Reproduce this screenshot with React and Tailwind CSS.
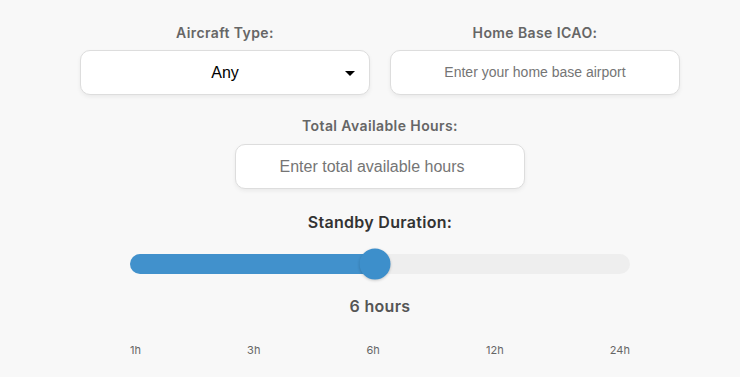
const ticks = ["1h", "3h", "6h", "12h", "24h"];

const Label = ({ children }) => (
  <label className="block text-center text-[14px] font-semibold leading-5 tracking-[0.4px] text-[#666] mb-[8px]">
    {children}
  </label>
);

export default function App() {
  const percent = 49;

  return (
    <div
      className="min-h-[377px] w-full bg-[#f8f8f8] pl-5 pt-[23px]"
      style={{ fontFamily: "Inter, 'Noto Sans', sans-serif" }}
    >
      <div className="mx-auto w-[600px]">
        <div className="grid grid-cols-2 gap-5">
          <div>
            <Label>Aircraft Type:</Label>
            <div className="relative -mt-px flex h-[45px] items-center justify-center rounded-[10px] border border-[#dddddd] bg-white shadow-[0_2px_4px_rgba(0,0,0,0.06)]">
              <span className="text-[16px] text-black" style={{ fontFamily: "'Liberation Sans', Arial, sans-serif" }}>
                Any
              </span>
              <span className="absolute right-[14px] top-[20px] h-0 w-0 border-x-[5px] border-t-[5px] border-x-transparent border-t-black" />
            </div>
          </div>
          <div>
            <Label>Home Base ICAO:</Label>
            <div className="-mt-px flex h-[45px] items-center justify-center rounded-[10px] border border-[#dddddd] bg-white shadow-[0_2px_4px_rgba(0,0,0,0.06)]">
              <span className="text-[14px] text-[#757575]" style={{ fontFamily: "'Liberation Sans', Arial, sans-serif" }}>
                Enter your home base airport
              </span>
            </div>
          </div>
        </div>

        <div className="mx-auto mt-[21px] w-[290px]">
          <Label>Total Available Hours:</Label>
          <div className="flex h-[45px] items-center justify-center rounded-[10px] border border-[#dddddd] bg-white pr-4 shadow-[0_2px_4px_rgba(0,0,0,0.06)]">
            <span className="text-[16px] text-[#757575]" style={{ fontFamily: "'Liberation Sans', Arial, sans-serif" }}>
              Enter total available hours
            </span>
          </div>
        </div>

        <div className="mt-[22px] text-center text-[16px] font-semibold leading-[22px] tracking-[0.3px] text-[#333]">
          Standby Duration:
        </div>

        <div className="mx-auto mt-[21px] w-[500px]">
          <div className="relative h-[20px] rounded-full bg-[#eeeeee]">
            <div className="h-full rounded-l-full bg-[#4191cc]" style={{ width: `${percent}%` }} />
            <div
              className="absolute top-1/2 h-[31px] w-[31px] -translate-x-1/2 -translate-y-1/2 rounded-full bg-[#3d8fcb] shadow-[0_1px_3px_rgba(0,0,0,0.2)]"
              style={{ left: `${percent}%` }}
            />
          </div>

          <div className="mt-[20px] text-center text-[16px] font-semibold leading-6 tracking-[0.3px] text-[#555]">6 hours</div>

          <div className="mt-[24px] flex justify-between text-[11px] text-[#666]">
            {ticks.map((t) => (
              <span key={t}>{t}</span>
            ))}
          </div>
        </div>
      </div>
    </div>
  );
}
